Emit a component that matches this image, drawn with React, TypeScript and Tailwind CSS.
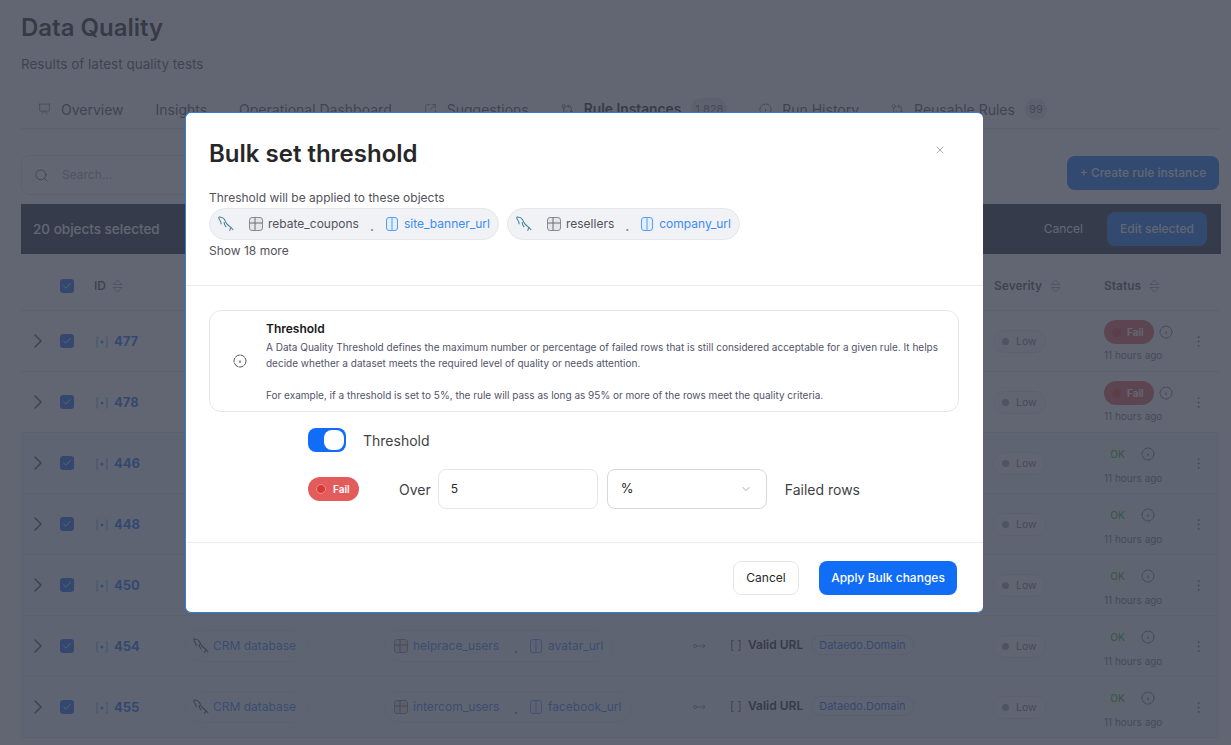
import React from 'react';
import { ChevronDown, ChevronRight, MoreVertical, Presentation, Search, SquareArrowOutUpRight, X, GitCompareArrows, Check } from 'lucide-react';

const font = 'font-["Inter",sans-serif]';

function Dolphin({ className = 'h-[16px] w-[16px] text-[#3f8296]' }: { className?: string }) {
  return (
    <svg viewBox="0 0 16 16" fill="none" stroke="currentColor" strokeWidth="1.05" className={`shrink-0 ${className}`}>
      <path d="M.8 1c2.6-.3 4.4.6 5.5 2.3 1 1.7 1.5 3.4 2.8 4.9 1.2 1.4 2.7 2.2 3.9 3.1l2.2 2.7" />
      <path d="M.8 1c-.3 1.6.7 2.8 1.4 3.8.7 1 .9 2.2 1 3.5" />
      <path d="M6 6c.2 2 .9 3.6 2.2 5.2M12.8 11.5l-1.2 3.4" />
    </svg>
  );
}

function TableIcon() {
  return (
    <svg viewBox="0 0 14 14" fill="none" className="h-[14px] w-[14px] shrink-0">
      <rect x="0.5" y="0.5" width="13" height="13" rx="2.5" fill="#e5e5ea" stroke="#8b8b96" />
      <path d="M0.5 6h13M6 0.5v13" stroke="#6d6d78" />
    </svg>
  );
}

function ColumnIcon() {
  return (
    <svg viewBox="0 0 12 14" fill="none" className="h-[14px] w-[12px] shrink-0">
      <rect x="0.5" y="0.5" width="11" height="13" rx="2.5" fill="#e3eeff" stroke="#5b9bf8" />
      <path d="M6 0.5v13" stroke="#5b9bf8" />
    </svg>
  );
}

function RuleIcon() {
  return (
    <svg viewBox="0 0 12 12" fill="none" className="h-[12px] w-[12px] shrink-0 text-[#2f7fe8]">
      <path d="M2.5 1H1v10h1.5M9.5 1H11v10H9.5" stroke="currentColor" strokeWidth="0.7" />
      <circle cx="6" cy="6" r="1.5" fill="currentColor" />
    </svg>
  );
}

function SortIcon() {
  return (
    <svg viewBox="0 0 13 14" fill="none" stroke="#9ca3af" className="h-[14px] w-[13px] shrink-0">
      <path d="M2 5.5 6.5 1 11 5.5ZM2 8.5 6.5 13 11 8.5Z" strokeLinejoin="round" />
    </svg>
  );
}

function InfoDot({ className = 'h-[14px] w-[14px] text-[#3f3f46]' }: { className?: string }) {
  return (
    <svg viewBox="0 0 14 14" fill="none" stroke="currentColor" className={`shrink-0 ${className}`}>
      <circle cx="7" cy="7" r="6" strokeWidth="0.9" strokeDasharray="5 0.6" />
      <path d="M7 6.4v2.6" strokeWidth="1" />
    </svg>
  );
}

function TickBox() {
  return (
    <div className="flex h-[14px] w-[14px] items-center justify-center rounded-[3px] bg-[#1b6cf0]">
      <Check className="h-[10px] w-[10px] text-white" strokeWidth={2} />
    </div>
  );
}

function Tab({ icon, label, active, badge }: { icon?: React.ReactNode; label: string; active?: boolean; badge?: string }) {
  return (
    <div className={`flex items-center ${active ? 'text-[13.8px] font-semibold text-[#27272a]' : 'text-[14px] text-[#52525b]'}`}>
      {icon && <span className="mr-[10px] flex w-[13px] items-center justify-center">{icon}</span>}
      <span>{label}</span>
      {badge && (
        <span className="ml-[10px] flex h-[22px] min-w-[22px] items-center justify-center rounded-full bg-[#e5e7eb] px-1 text-[11px] font-normal text-[#6b7280]">
          {badge}
        </span>
      )}
    </div>
  );
}

type Row = { id: number; status: 'Fail' | 'OK'; table?: string; column?: string };

const rows: Row[] = [
  { id: 477, status: 'Fail' },
  { id: 478, status: 'Fail' },
  { id: 446, status: 'OK' },
  { id: 448, status: 'OK' },
  { id: 450, status: 'OK' },
  { id: 454, status: 'OK', table: 'helprace_users', column: 'avatar_url' },
  { id: 455, status: 'OK', table: 'intercom_users', column: 'facebook_url' },
];

function TableRow({ row, index }: { row: Row; index: number }) {
  return (
    <div className={`grid h-[61px] grid-cols-[39px_34px_91px_199px_305px_34px_270px_111px_85px_30px] items-center border-b border-[#e5e7eb] ${index > 1 ? 'bg-[#ecf6fc]' : ''}`}>
      <ChevronRight className="ml-[5px] h-[24px] w-[24px] text-[#52525b]" strokeWidth={1.6} />
      <TickBox />
      <div className="mt-[1px] flex items-center gap-[6px] pl-[2px] text-[13px] font-bold text-[#1b6cf0]">
        <RuleIcon />
        {row.id}
      </div>
      <div>
        {row.table && (
          <div className="flex h-[32px] w-[124px] items-center gap-[4px] rounded-full border border-[#e5e7eb] pl-[7px] text-[12px] text-[#3b82f6]">
            <Dolphin className="h-[16px] w-[16px] text-[#3f3f46]" />
            CRM database
          </div>
        )}
      </div>
      <div>
        {row.table && (
          <div className="flex h-[32px] w-fit items-center rounded-full border border-[#e5e7eb] pl-[9px] pr-[10px] text-[12px] text-[#3b82f6]">
            <TableIcon />
            <span className="ml-[5px] w-[101px]">{row.table}</span>
            <span className="mt-[6px] w-[16px] font-bold text-[#6b7280]">.</span>
            <ColumnIcon />
            <span className="ml-[6px]">{row.column}</span>
          </div>
        )}
      </div>
      <div className="pl-[4px]">
        {row.table && (
          <svg viewBox="0 0 13 6" fill="none" stroke="#6b7280" strokeWidth="0.8" className="h-[6px] w-[13px]">
            <circle cx="2" cy="3" r="1.5" />
            <path d="M3.5 3H12M10 1l2 2-2 2" />
          </svg>
        )}
      </div>
      <div>
        {row.table && (
          <div className="-mt-[2px] flex items-center">
            <span className="ml-[7px] mr-[5px] w-[13px] whitespace-nowrap text-[12px] font-light text-[#27272a]">[ ]</span>
            <span className="text-[12px] font-semibold text-[#27272a]">Valid URL</span>
            <span className="ml-[8px] flex h-[20px] items-center rounded-full border border-[#c9daf8] px-[7px] text-[11px] text-[#1b6cf0]">Dataedo.Domain</span>
          </div>
        )}
      </div>
      <div className="mt-[1px] flex h-[23px] w-[53px] items-center gap-[7px] rounded-full border border-[#e5e7eb] bg-[#f5f8fb] pl-[8px] text-[10.5px] text-[#6b7280]">
        <span className="h-[7px] w-[7px] rounded-full bg-[#9ca3af]" />
        Low
      </div>
      <div>
        <div className="flex items-center gap-[5px]">
          {row.status === 'Fail' ? (
            <span className="flex h-[24px] w-[50px] items-center gap-[6px] rounded-full bg-[#e25c5c] pl-[8px] text-[10px] font-semibold text-white">
              <span className="h-[9px] w-[9px] rounded-full bg-[#d83a3a]" />
              Fail
            </span>
          ) : (
            <span className="mr-[5px] flex h-[26px] w-[27px] items-center justify-center rounded-full border border-[#dff3e2] bg-[#eefaf0] text-[10px] font-medium text-[#3da552]">
              OK
            </span>
          )}
          <InfoDot className="h-[14px] w-[14px] text-[#52525b]" />
        </div>
        <div className="mt-[4px] text-[10px] leading-[14px] text-[#6b7280]">11 hours ago</div>
      </div>
      <MoreVertical className="ml-[2px] h-[15px] w-[15px] text-[#52525b]" strokeWidth={1} />
    </div>
  );
}

function ChipPair({ table, column }: { table: string; column: string }) {
  return (
    <div className="flex h-[32px] items-center rounded-full border border-[#e5e7eb] bg-[#f1f2f5] pl-[8px] pr-[8px] text-[12px]">
      <Dolphin />
      <span className="ml-[15px]"><TableIcon /></span>
      <span className="ml-[5px] text-[#52525b]">{table}</span>
      <span className="ml-[11px] mr-[12px] mt-[6px] font-bold text-[#8b8b96]">.</span>
      <ColumnIcon />
      <span className="ml-[6px] text-[#3b8bf7]">{column}</span>
    </div>
  );
}

export default function App() {
  return (
    <div className={`relative h-[745px] w-[1231px] overflow-hidden bg-white ${font}`}>
      {/* page behind the dialog */}
      <div className="pl-[21px] pr-[12px] pt-[12px]">
        <h1 className="text-[24px] font-semibold leading-[32px] text-[#27272a]">Data Quality</h1>
        <p className="mt-[10px] text-[13.5px] leading-[20px] text-[#52525b]">Results of latest quality tests</p>
        <div className="mt-[18px] flex h-[37px] w-[1198px] items-center gap-[32px] border-b border-[#e5e7eb] pb-[2px] pl-[17px]">
          <Tab icon={<Presentation className="h-[14px] w-[14px]" strokeWidth={1.2} />} label="Overview" />
          <Tab label="Insights" />
          <Tab label="Operational Dashboard" />
          <Tab icon={<SquareArrowOutUpRight className="h-[13px] w-[13px]" strokeWidth={1.2} />} label="Suggestions" />
          <Tab icon={<GitCompareArrows className="h-[13px] w-[13px]" strokeWidth={1.2} />} label="Rule Instances" active badge="1 828" />
          <Tab icon={<InfoDot className="h-[13px] w-[13px]" />} label="Run History" />
          <Tab icon={<GitCompareArrows className="h-[13px] w-[13px]" strokeWidth={1.2} />} label="Reusable Rules" badge="99" />
        </div>
        <div className="mt-[26px] flex w-[1198px] items-start justify-between">
          <div className="flex h-[40px] w-[240px] items-center gap-[13px] rounded-lg border border-[#e5e7eb] pl-[12px] text-[12px] text-[#9ca3af]">
            <Search className="h-[15px] w-[15px] text-[#52525b]" strokeWidth={1.4} />
            Search...
          </div>
          <div className="mt-px flex h-[34px] w-[152px] items-center justify-center rounded-lg bg-[#116df5] text-[12px] font-medium text-white">
            + Create rule instance
          </div>
        </div>
        <div className="mt-[9px] flex h-[50px] w-[1200px] items-center justify-between bg-[#1f2937] pl-[12px] pr-[14px] text-[13.5px] text-white">
          <span className="font-medium">20 objects selected</span>
          <div className="flex items-center gap-[24px] text-[12px]">
            <span>Cancel</span>
            <span className="flex h-[34px] w-[100px] items-center justify-center rounded-lg bg-[#116df5] font-medium">Edit selected</span>
          </div>
        </div>
        <div className="grid h-[57px] grid-cols-[39px_34px_900px_110px_100px] items-center border-b border-[#e5e7eb] pt-[7px] text-[12px] font-semibold text-[#52525b]">
          <span />
          <TickBox />
          <span className="flex items-center gap-[5px]">ID <SortIcon /></span>
          <span className="flex items-center gap-[7px]">Severity <SortIcon /></span>
          <span className="flex items-center gap-[7px]">Status <SortIcon /></span>
        </div>
        {rows.map((row, i) => (
          <TableRow key={row.id} row={row} index={i} />
        ))}
      </div>

      {/* overlay */}
      <div className="absolute inset-0 bg-[rgba(59,64,79,0.8)]" />

      {/* dialog */}
      <div className="absolute left-[185px] top-[112px] flex h-[501px] w-[798px] flex-col rounded-[6px] border border-[#2f7fdc] border-r-0 bg-white">
        <div className="relative h-[173px] border-b border-[#e9ebf0] pl-[23px] pr-[24px] pt-[25px]">
          <h2 className="text-[24px] font-semibold leading-[32px] text-[#27272a]">Bulk set threshold</h2>
          <X className="absolute right-[37px] top-[31px] h-[12px] w-[12px] text-[#71717a]" strokeWidth={1.2} />
          <p className="mt-[20px] text-[12px] leading-[16px] text-[#52525b]">Threshold will be applied to these objects</p>
          <div className="mt-[2px] flex gap-[8px]">
            <ChipPair table="rebate_coupons" column="site_banner_url" />
            <ChipPair table="resellers" column="company_url" />
          </div>
          <p className="mt-[3px] text-[12px] leading-[16px] text-[#52525b]">Show 18 more</p>
        </div>
        <div className="h-[257px] border-b border-[#e9ebf0] pl-[23px] pr-[24px] pt-[24px]">
          <div className="flex h-[102px] items-center rounded-[12px] border border-[#e5e7eb]">
            <span className="flex w-[56px] shrink-0 justify-center pl-[4px]">
              <InfoDot />
            </span>
            <div className="pr-[16px]">
              <div className="mt-[1px] text-[12px] font-semibold leading-[16px] text-[#18181b]">Threshold</div>
              <p className="mt-[2px] text-[10px] leading-[16px] text-[#52526a]">
                A Data Quality Threshold defines the maximum number or percentage of failed rows that is still considered acceptable for a given rule. It helps decide whether a dataset meets the required level of quality or needs attention.
                <br />
                <br />
                For example, if a threshold is set to 5%, the rule will pass as long as 95% or more of the rows meet the quality criteria.
              </p>
            </div>
          </div>
          <div className="ml-[99px] mt-[16px] flex items-center">
            <div className="flex h-[24px] w-[38px] items-center justify-end rounded-[8px] bg-[#116df5] pr-[2px]">
              <div className="h-[20px] w-[20px] rounded-[8px] bg-white" />
            </div>
            <span className="ml-[17px] text-[14px] text-[#3f3f46]">Threshold</span>
          </div>
          <div className="ml-[99px] mt-[17px] flex items-center">
            <div className="flex h-[24px] w-[51px] items-center gap-[7px] rounded-full bg-[#e25c5c] pl-[8px] text-[10px] font-semibold text-white">
              <span className="h-[10px] w-[10px] rounded-full border border-[#f08a8a] bg-[#d83a3a]" />
              Fail
            </div>
            <span className="ml-[40px] text-[14px] text-[#3f3f46]">Over</span>
            <div className="ml-[7px] flex h-[40px] w-[160px] items-center rounded-[8px] border border-[#e5e7eb] pl-[12px] text-[12px] text-[#27272a]">5</div>
            <div className="ml-[9px] flex h-[40px] w-[160px] items-center justify-between rounded-[8px] border border-[#d8d8dc] pl-[13px] pr-[14px] text-[13px] text-[#27272a]">
              %
              <ChevronDown className="h-[12px] w-[12px] text-[#71717a]" strokeWidth={1.2} />
            </div>
            <span className="ml-[18px] text-[14px] text-[#3f3f46]">Failed rows</span>
          </div>
        </div>
        <div className="flex flex-1 items-center justify-end gap-[20px] pr-[26px] text-[12px]">
          <span className="flex h-[34px] w-[66px] items-center justify-center rounded-lg border border-[#e5e7eb] text-[#27272a]">Cancel</span>
          <span className="flex h-[34px] w-[138px] items-center justify-center rounded-lg bg-[#116df5] font-medium text-white">Apply Bulk changes</span>
        </div>
      </div>
    </div>
  );
}
